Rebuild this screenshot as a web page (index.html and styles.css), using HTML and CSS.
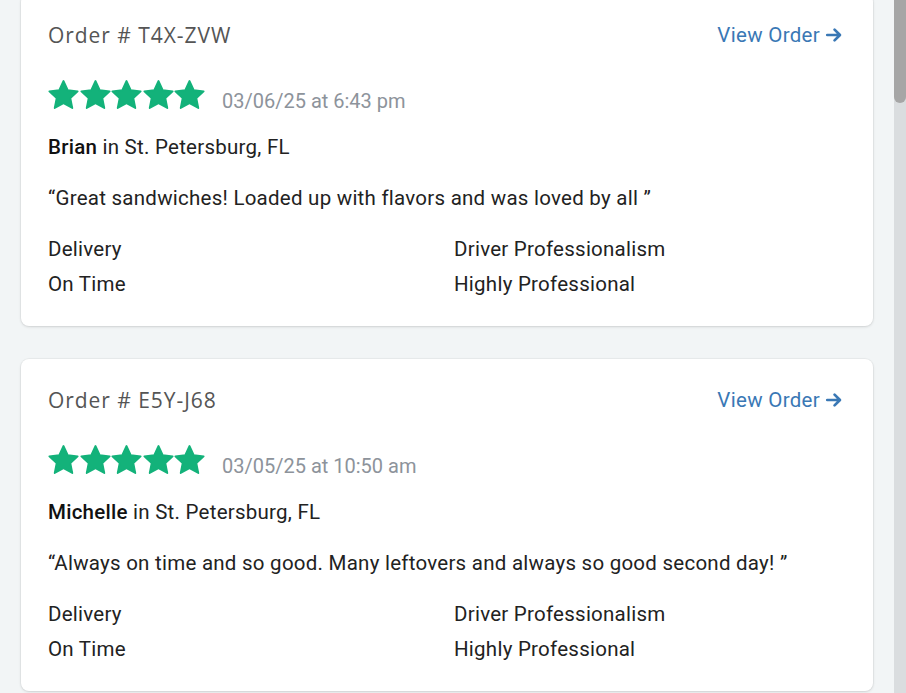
FILE: index.html
```html
<!DOCTYPE html>
<html>
<head>
<meta charset="utf-8">
<link rel="stylesheet" href="styles.css">
</head>
<body>
<div class="page">
  <main class="list">
    <article class="card">
      <div class="card-head">
        <span class="order-no">Order # T4X-ZVW</span>
        <a class="view-link">View Order <svg class="arrow" viewBox="0 0 16 16"><path d="M2 8h11M8.5 3.2 13.3 8l-4.8 4.8" fill="none" stroke="currentColor" stroke-width="2.4" stroke-linecap="round" stroke-linejoin="round"/></svg></a>
      </div>
      <div class="rating">
        <div class="stars">
          <svg class="star" viewBox="1 0.9 22 21.1"><path d="M12 1.6l3.1 6.6 7.2.9-5.3 5 1.4 7.2L12 17.8l-6.4 3.5 1.4-7.2-5.3-5 7.2-.9z"/></svg>
          <svg class="star" viewBox="1 0.9 22 21.1"><path d="M12 1.6l3.1 6.6 7.2.9-5.3 5 1.4 7.2L12 17.8l-6.4 3.5 1.4-7.2-5.3-5 7.2-.9z"/></svg>
          <svg class="star" viewBox="1 0.9 22 21.1"><path d="M12 1.6l3.1 6.6 7.2.9-5.3 5 1.4 7.2L12 17.8l-6.4 3.5 1.4-7.2-5.3-5 7.2-.9z"/></svg>
          <svg class="star" viewBox="1 0.9 22 21.1"><path d="M12 1.6l3.1 6.6 7.2.9-5.3 5 1.4 7.2L12 17.8l-6.4 3.5 1.4-7.2-5.3-5 7.2-.9z"/></svg>
          <svg class="star" viewBox="1 0.9 22 21.1"><path d="M12 1.6l3.1 6.6 7.2.9-5.3 5 1.4 7.2L12 17.8l-6.4 3.5 1.4-7.2-5.3-5 7.2-.9z"/></svg>
        </div>
        <span class="date">03/06/25 at 6:43 pm</span>
      </div>
      <p class="author"><strong>Brian</strong> in St. Petersburg, FL</p>
      <p class="quote">“Great sandwiches! Loaded up with flavors and was loved by all ”</p>
      <div class="details">
        <span>Delivery</span><span>Driver Professionalism</span>
        <span>On Time</span><span>Highly Professional</span>
      </div>
    </article>
    <article class="card">
      <div class="card-head">
        <span class="order-no">Order # E5Y-J68</span>
        <a class="view-link">View Order <svg class="arrow" viewBox="0 0 16 16"><path d="M2 8h11M8.5 3.2 13.3 8l-4.8 4.8" fill="none" stroke="currentColor" stroke-width="2.4" stroke-linecap="round" stroke-linejoin="round"/></svg></a>
      </div>
      <div class="rating">
        <div class="stars">
          <svg class="star" viewBox="1 0.9 22 21.1"><path d="M12 1.6l3.1 6.6 7.2.9-5.3 5 1.4 7.2L12 17.8l-6.4 3.5 1.4-7.2-5.3-5 7.2-.9z"/></svg>
          <svg class="star" viewBox="1 0.9 22 21.1"><path d="M12 1.6l3.1 6.6 7.2.9-5.3 5 1.4 7.2L12 17.8l-6.4 3.5 1.4-7.2-5.3-5 7.2-.9z"/></svg>
          <svg class="star" viewBox="1 0.9 22 21.1"><path d="M12 1.6l3.1 6.6 7.2.9-5.3 5 1.4 7.2L12 17.8l-6.4 3.5 1.4-7.2-5.3-5 7.2-.9z"/></svg>
          <svg class="star" viewBox="1 0.9 22 21.1"><path d="M12 1.6l3.1 6.6 7.2.9-5.3 5 1.4 7.2L12 17.8l-6.4 3.5 1.4-7.2-5.3-5 7.2-.9z"/></svg>
          <svg class="star" viewBox="1 0.9 22 21.1"><path d="M12 1.6l3.1 6.6 7.2.9-5.3 5 1.4 7.2L12 17.8l-6.4 3.5 1.4-7.2-5.3-5 7.2-.9z"/></svg>
        </div>
        <span class="date">03/05/25 at 10:50 am</span>
      </div>
      <p class="author"><strong>Michelle</strong> in St. Petersburg, FL</p>
      <p class="quote">“Always on time and so good. Many leftovers and always so good second day! ”</p>
      <div class="details">
        <span>Delivery</span><span>Driver Professionalism</span>
        <span>On Time</span><span>Highly Professional</span>
      </div>
    </article>
  </main>
  <div class="scrollbar"><div class="thumb"></div></div>
</div>
</body>
</html>
```

FILE: styles.css
```css
* { box-sizing: border-box; }
html, body { margin: 0; height: 100%; overflow: hidden; }
body {
  background: #f2f5f6;
  font-family: Roboto, "Liberation Sans", sans-serif;
  color: #222;
}
.page {
  display: flex;
  height: 693px;
}
.list {
  flex: 1;
  padding: 0 21px;
  margin-top: -6px;
  display: flex;
  flex-direction: column;
  gap: 33px;
}
.card {
  background: #fff;
  border-radius: 8px;
  box-shadow: 0 1px 3px rgba(0,0,0,0.12), 0 0 0 1px rgba(0,0,0,0.03);
  padding: 29px 30px 30px 27px;
  flex-shrink: 0;
}
.card-head {
  display: flex;
  justify-content: space-between;
  align-items: center;
  height: 24px;
}
.order-no {
  font-family: "Open Sans", sans-serif;
  font-size: 21px;
  color: #555;
  letter-spacing: 0.95px;
  margin-top: -1px;
}
.view-link {
  color: #3a78b5;
  font-size: 20.5px;
  letter-spacing: 0.3px;
  display: flex;
  align-items: center;
  gap: 5px;
}
.arrow { width: 18px; height: 18px; }
.rating {
  display: flex;
  align-items: center;
  margin-top: 33px;
  height: 28px;
  gap: 17px;
}
.stars { display: flex; gap: 0.5px; }
.star {
  width: 31px;
  height: 29px;
  fill: #13b27a;
  stroke: #13b27a;
  stroke-width: 1.3;
  stroke-linejoin: round;
}
.date {
  color: #8d939b;
  font-size: 20px;
  padding-top: 13px;
}
.author, .quote {
  margin: 27px 0 0;
  font-size: 20.5px;
  letter-spacing: 0.25px;
  line-height: 24px;
}
.author strong { font-weight: 500; color: #111; }
.details {
  margin-top: 27px;
  display: grid;
  grid-template-columns: 1fr 1fr;
  column-gap: 17px;
  row-gap: 11px;
  font-size: 20.5px;
  letter-spacing: 0.25px;
  line-height: 24px;
}
.scrollbar {
  width: 12px;
  background: #dadddf;
  flex-shrink: 0;
}
.thumb {
  height: 103px;
  background: #a6a6a6;
  border-radius: 0 0 6px 6px;
}
```
